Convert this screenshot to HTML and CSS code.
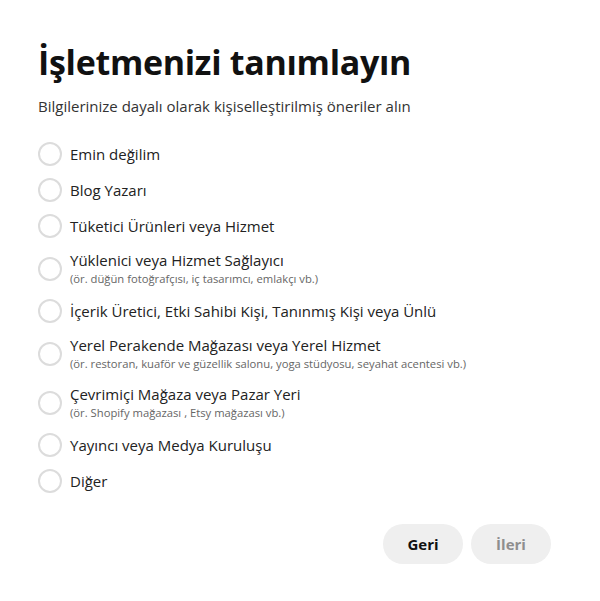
FILE: index.html
```html
<!DOCTYPE html>
<html lang="tr">
<head>
  <meta charset="UTF-8" />
  <meta name="viewport" content="width=device-width, initial-scale=1.0" />
  <title>İşletmenizi tanımlayın</title>
  <link rel="stylesheet" href="styles.css">
</head>
<body>
  <div class="panel">
    <h1>İşletmenizi tanımlayın</h1>
    <p class="intro">Bilgilerinize dayalı olarak kişiselleştirilmiş öneriler alın</p>

    <div class="options">
      <label class="option">
        <input type="radio" name="type" />
        <span class="text"><span class="main">Emin değilim</span></span>
      </label>
      <label class="option">
        <input type="radio" name="type" />
        <span class="text"><span class="main">Blog Yazarı</span></span>
      </label>
      <label class="option">
        <input type="radio" name="type" />
        <span class="text"><span class="main">Tüketici Ürünleri veya Hizmet</span></span>
      </label>
      <label class="option">
        <input type="radio" name="type" />
        <span class="text">
          <span class="main">Yüklenici veya Hizmet Sağlayıcı</span>
          <span class="sub">(ör. düğün fotoğrafçısı, iç tasarımcı, emlakçı vb.)</span>
        </span>
      </label>
      <label class="option">
        <input type="radio" name="type" />
        <span class="text"><span class="main">İçerik Üretici, Etki Sahibi Kişi, Tanınmış Kişi veya Ünlü</span></span>
      </label>
      <label class="option">
        <input type="radio" name="type" />
        <span class="text">
          <span class="main">Yerel Perakende Mağazası veya Yerel Hizmet</span>
          <span class="sub">(ör. restoran, kuaför ve güzellik salonu, yoga stüdyosu, seyahat acentesi vb.)</span>
        </span>
      </label>
      <label class="option">
        <input type="radio" name="type" />
        <span class="text">
          <span class="main">Çevrimiçi Mağaza veya Pazar Yeri</span>
          <span class="sub">(ör. Shopify mağazası , Etsy mağazası vb.)</span>
        </span>
      </label>
      <label class="option">
        <input type="radio" name="type" />
        <span class="text"><span class="main">Yayıncı veya Medya Kuruluşu</span></span>
      </label>
      <label class="option">
        <input type="radio" name="type" />
        <span class="text"><span class="main">Diğer</span></span>
      </label>
    </div>

    <div class="actions">
      <button class="btn">Geri</button>
      <button class="btn" disabled>İleri</button>
    </div>
  </div>
</body>
</html>
```

FILE: styles.css
```css
body {
  margin: 0;
  background: #fff;
  font-family: "Open Sans", "Noto Sans", sans-serif;
  color: #111;
}
.panel {
  padding: 38px 49px 0 38px;
}
h1 {
  margin: 0;
  font-size: 34px;
  font-weight: 700;
  line-height: 48px;
  letter-spacing: -0.3px;
  color: #111;
}
.intro {
  margin: 10px 0 26px;
  font-size: 15px;
  line-height: 20px;
  color: #333;
}
.options {
  display: flex;
  flex-direction: column;
  gap: 12px;
}
.option {
  display: flex;
  align-items: center;
  gap: 8px;
  min-height: 24px;
  cursor: pointer;
}
.option input {
  appearance: none;
  -webkit-appearance: none;
  margin: 0;
  width: 24px;
  height: 24px;
  flex: none;
  border: 2px solid #dcdcdc;
  border-radius: 50%;
  background: #fff;
}
.text {
  display: flex;
  flex-direction: column;
}
.main {
  font-size: 15px;
  line-height: 21px;
  color: #222;
}
.sub {
  font-size: 11.25px;
  line-height: 16px;
  color: #666;
}
.actions {
  display: flex;
  justify-content: flex-end;
  gap: 8px;
  margin-top: 31px;
}
.btn {
  width: 80px;
  height: 40px;
  border: none;
  border-radius: 20px;
  background: #efefef;
  font-family: inherit;
  font-size: 15px;
  font-weight: 700;
  color: #111;
}
.btn:disabled {
  color: #8e8e8e;
}
```
